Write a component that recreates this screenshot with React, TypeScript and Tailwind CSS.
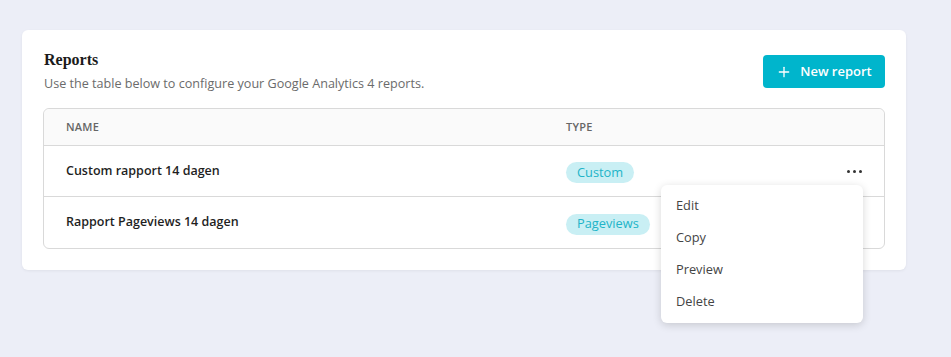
import { Plus } from "lucide-react";

const reports = [
  { name: "Custom rapport 14 dagen", type: "Custom", menu: true },
  { name: "Rapport Pageviews 14 dagen", type: "Pageviews", menu: false },
];

export default function App() {
  return (
    <div className="min-h-[357px] w-[951px] bg-[#eceef7] pt-[30px] pl-[22px] font-['Open_Sans',sans-serif]">
      <div className="w-[884px] rounded-md bg-white px-[21px] pt-[20px] pb-[21px] shadow-[0_1px_3px_rgba(0,0,0,0.06)]">
        {/* Header */}
        <div className="flex items-start justify-between">
          <div className="pl-[1px]">
            <h2 className="font-['Liberation_Serif',serif] text-[16px] font-bold leading-5 text-[#1b1b1b]">Reports</h2>
            <p className="mt-[6px] text-[12.6px] leading-4 text-[#6b6b6b]">
              Use the table below to configure your Google Analytics 4 reports.
            </p>
          </div>
          <button className="mt-[5px] flex h-[33px] w-[122px] items-center justify-center gap-2 rounded bg-[#00b5cc] text-[13px] font-semibold text-white">
            <Plus size={16} strokeWidth={2} />
            New report
          </button>
        </div>

        {/* Table */}
        <div className="relative mt-[16px] rounded-md border border-[#d9d9d9]">
          <div className="flex h-[37px] items-center rounded-t-md border-b border-[#d9d9d9] bg-[#fafafa] text-[11px] font-semibold uppercase tracking-[0.02em] text-[#666]">
            <div className="w-[522px] pl-[22px]">Name</div>
            <div className="flex-1">Type</div>
          </div>
          {reports.map((r, i) => (
            <div
              key={r.name}
              className={`flex h-[51px] items-center ${i < reports.length - 1 ? "border-b border-[#d9d9d9]" : ""}`}
            >
              <div className="w-[522px] pl-[22px] text-[12.5px] font-semibold text-[#1f1f1f]">{r.name}</div>
              <div className="flex-1">
                <span className="inline-flex h-[21px] items-center rounded-full bg-[#c9eff4] px-[11px] text-[12.8px] text-[#21b4c8]">
                  {r.type}
                </span>
              </div>
              {r.menu && (
                <div className="mr-[22px] flex items-center gap-[3px]">
                  <span className="h-[3px] w-[3px] rounded-full bg-[#333]" />
                  <span className="h-[3px] w-[3px] rounded-full bg-[#333]" />
                  <span className="h-[3px] w-[3px] rounded-full bg-[#333]" />
                </div>
              )}
            </div>
          ))}

          {/* Dropdown menu */}
          <div className="absolute left-[617px] top-[76px] z-10 w-[202px] rounded-md bg-white pt-[5px] pb-[5px] shadow-[0_2px_8px_rgba(0,0,0,0.16)]">
            {["Edit", "Copy", "Preview", "Delete"].map((item) => (
              <div key={item} className="flex h-8 items-center px-[15px] text-[12.8px] text-[#444]">
                {item}
              </div>
            ))}
          </div>
        </div>
      </div>
    </div>
  );
}
